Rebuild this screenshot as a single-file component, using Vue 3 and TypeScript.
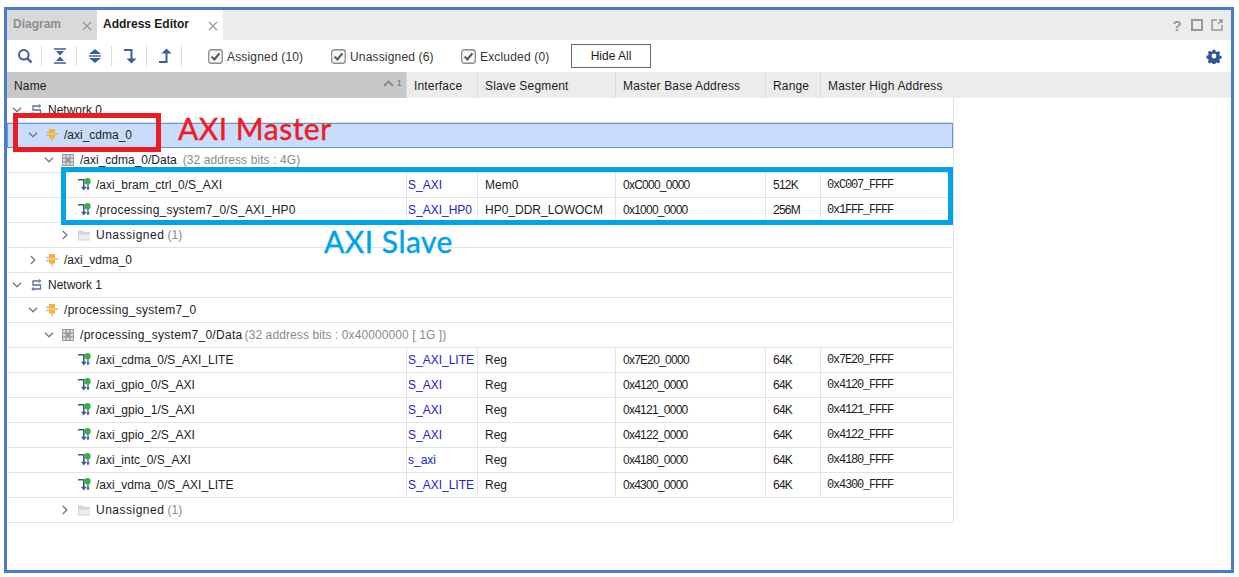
<template>
  <div class="frame">
    <div class="tabs">
      <div class="tab">
        <span>Diagram</span>
        <svg class="close" width="10" height="10" viewBox="0 0 10 10"><path d="M1 1l8 8M9 1l-8 8" /></svg>
      </div>
      <div class="tab active">
        <span>Address Editor</span>
        <svg class="close" width="10" height="10" viewBox="0 0 10 10"><path d="M1 1l8 8M9 1l-8 8" /></svg>
      </div>
      <div class="win-icons">
        <span class="help">?</span>
        <svg width="12" height="12" viewBox="0 0 12 12"><rect x="1" y="1" width="10" height="10" fill="none" stroke="#999" stroke-width="2" /></svg>
        <svg width="12" height="12" viewBox="0 0 12 12"><path d="M6 1H1v10h10V6M7 5l4-4M8 1h3v3" fill="none" stroke="#999" stroke-width="1.6" /></svg>
      </div>
    </div>

    <div class="toolbar">
      <button class="tool">
        <svg width="16" height="16" viewBox="0 0 16 16"><circle cx="6.8" cy="6.8" r="4.8" fill="none" stroke="#3d5f99" stroke-width="2" /><path d="M10.5 10.5l4 4" stroke="#3d5f99" stroke-width="2.4" /></svg>
      </button>
      <i class="sep"></i>
      <button class="tool">
        <svg width="14" height="16" viewBox="0 0 14 16"><path d="M1 1h12M1 15h12" stroke="#3d5f99" stroke-width="1.6" /><path d="M3 3h8L7 7.400zM3 13h8L7 8.600z" fill="#3d5f99" /></svg>
      </button>
      <i class="sep"></i>
      <button class="tool">
        <svg width="14" height="16" viewBox="0 0 14 16"><path d="M7 1l6 5H1zM7 15l-6-5h12z" fill="#3d5f99" /><path d="M1 8h12" stroke="#3d5f99" stroke-width="1.400" /></svg>
      </button>
      <i class="sep"></i>
      <button class="tool">
        <svg width="14" height="16" viewBox="0 0 14 16"><path d="M1 2h7.500v9" fill="none" stroke="#3d5f99" stroke-width="2" /><path d="M3.500 10.500h10L8.500 15.500z" fill="#3d5f99" /></svg>
      </button>
      <i class="sep"></i>
      <button class="tool">
        <svg width="14" height="16" viewBox="0 0 14 16"><path d="M1 14h7.500V5" fill="none" stroke="#3d5f99" stroke-width="2" /><path d="M3.500 5.500h10L8.500 .5z" fill="#3d5f99" /></svg>
      </button>
      <i class="sep"></i>
      <label v-for="f in filters" :key="f.label" class="check" :class="f.cls">
        <svg width="15" height="15" viewBox="0 0 15 15"><rect x=".75" y=".75" width="13.5" height="13.5" rx="2.5" fill="#f7f7f7" stroke="#8c8c8c" stroke-width="1.3" /><path d="M3.6 7.6l2.8 2.8 5-6" fill="none" stroke="#555" stroke-width="2" /></svg>
        <span>{{ f.label }}</span>
      </label>
      <button class="hide-all">Hide All</button>
      <svg class="gear" width="16" height="16" viewBox="0 0 16 16">
        <path d="M6.6 1h2.8l.4 2 1.3.6 1.8-1.100 2 2-1.100 1.800.6 1.300 2 .4v2.800l-2 .4-.6 1.300 1.100 1.800-2 2-1.800-1.100-1.300.6-.4 2H6.600l-.4-2-1.300-.6-1.800 1.100-2-2 1.100-1.800-.6-1.300-2-.4V7.600l2-.4.6-1.300L1.100 4.100l2-2 1.800 1.100 1.300-.6z" transform="translate(.8 .8) scale(.9)" fill="#2f5597" />
        <circle cx="8" cy="8" r="2.400" fill="#fff" />
      </svg>
    </div>

    <div class="head">
      <div class="hcell name-head">
        <span>Name</span>
        <span class="sort">
          <svg width="11" height="7" viewBox="0 0 11 7"><path d="M1 6l4.500-4.500L10 6" fill="none" stroke="#8a8a8a" stroke-width="2" /></svg>
          <b>1</b>
        </span>
      </div>
      <div v-for="h in heads" :key="h" class="hcell">{{ h }}</div>
    </div>

    <div class="grid">
      <div v-for="(r, i) in rows" :key="i" class="row" :class="{ selected: r.selected, leaf: r.high }">
        <div class="cell name" :class="'lv' + r.level">
          <span class="chev">
            <svg v-if="r.open === true" width="10" height="6" viewBox="0 0 10 6"><path d="M1 .8l4 4 4-4" fill="none" stroke="#777" stroke-width="1.300" /></svg>
            <svg v-else-if="r.open === false" width="6" height="10" viewBox="0 0 6 10"><path d="M.8 1l4 4-4 4" fill="none" stroke="#777" stroke-width="1.300" /></svg>
          </span>
          <span class="ico">
            <svg v-if="r.kind === 'net'" width="12" height="12" viewBox="0 0 12 12">
              <path d="M10.500 2H3v4h7.500v4H2" fill="none" stroke="#5c6f96" stroke-width="1.300" />
              <path d="M8.800 .3l2 1.700-2 1.700M3.800 8.300L1.800 10l2 1.700" fill="none" stroke="#5c6f96" stroke-width="1" />
            </svg>
            <svg v-else-if="r.kind === 'cpu'" width="14" height="14" viewBox="0 0 14 14">
              <path d="M1 4.500h3M1 7.500h3M10 6h3M7 10v3.500" stroke="#b9b9b9" stroke-width="1.300" />
              <rect x="4" y="1" width="6" height="9.500" fill="#f9b233" />
              <rect x="4" y="5.400" width="6" height="1.100" fill="#fcd98f" />
            </svg>
            <svg v-else-if="r.kind === 'grid'" width="12" height="12" viewBox="0 0 12 12">
              <rect width="12" height="12" fill="#9a9a9a" />
              <path d="M1 1h2.500v2.500H1zM4.800 1h2.400v2.500H4.800zM8.500 1H11v2.500H8.500zM1 4.800h2.500v2.400H1zM8.500 4.800H11v2.400H8.500zM1 8.500h2.500V11H1zM4.800 8.500h2.400V11H4.800zM8.500 8.500H11V11H8.500z" fill="#dedede" />
            </svg>
            <svg v-else-if="r.kind === 'leaf'" width="13" height="14" viewBox="0 0 13 14">
              <path d="M0 1.800h5.800v8" fill="none" stroke="#3b5a94" stroke-width="1.600" />
              <path d="M3 8.800h5.600l-2.800 3.700z" fill="#3b5a94" />
              <path d="M10 5.500v5" stroke="#3b5a94" stroke-width="1.300" />
              <path d="M8.200 9.500h3.600L10 12.500z" fill="#3b5a94" />
              <circle cx="9.500" cy="3.300" r="3.200" fill="#3fae49" />
            </svg>
            <svg v-else-if="r.kind === 'folder'" width="12" height="11" viewBox="0 0 12 11">
              <path d="M0 .5h5l1 1.500h6v8.500H0z" fill="#d4d4d4" />
              <path d="M1 4.500h11v5H1z" fill="#ececec" />
            </svg>
          </span>
          <span class="label" :class="labelClass(r)">{{ r.name }}</span>
          <span v-if="r.note" class="note" :style="{ marginLeft: r.gap + 'px' }">{{ r.note }}</span>
        </div>
        <template v-if="r.high">
          <div class="cell iface">{{ r.iface }}</div>
          <div class="cell seg">{{ r.seg }}</div>
          <div class="cell tight">{{ r.base }}</div>
          <div class="cell tight">{{ r.range }}</div>
          <div class="cell high">{{ r.high }}</div>
        </template>
      </div>
    </div>

    <div class="mark-red"></div>
    <div class="title-red">AXI Master</div>
    <div class="mark-blue"></div>
    <div class="title-blue">AXI Slave</div>
  </div>
</template>

<script setup lang="ts">
interface Row {
  level: number
  kind: "net" | "cpu" | "grid" | "leaf" | "folder"
  name: string
  open?: boolean
  note?: string
  gap?: number
  selected?: boolean
  iface?: string
  seg?: string
  base?: string
  range?: string
  high?: string
}

const filters = [
  { label: "Assigned (10)", cls: "f1" },
  { label: "Unassigned (6)", cls: "f2" },
  { label: "Excluded (0)", cls: "f3" },
]

const heads = ["Interface", "Slave Segment", "Master Base Address", "Range", "Master High Address"]

function leaf(name: string, iface: string, seg: string, base: string, range: string, high: string): Row {
  return { level: 3, kind: "leaf", name, iface, seg, base, range, high }
}

function labelClass(r: Row) {
  if (r.kind === "folder") return "wider"
  if (r.name.endsWith("HP0")) return "wide-sm"
  return r.name.includes("processing") ? "wide" : ""
}

const rows: Row[] = [
  { level: 0, kind: "net", name: "Network 0", open: true },
  { level: 1, kind: "cpu", name: "/axi_cdma_0", open: true, selected: true },
  { level: 2, kind: "grid", name: "/axi_cdma_0/Data", open: true, note: "(32 address bits : 4G)", gap: 6 },
  leaf("/axi_bram_ctrl_0/S_AXI", "S_AXI", "Mem0", "0xC000_0000", "512K", "0xC007_FFFF"),
  leaf("/processing_system7_0/S_AXI_HP0", "S_AXI_HP0", "HP0_DDR_LOWOCM", "0x1000_0000", "256M", "0x1FFF_FFFF"),
  { level: 3, kind: "folder", name: "Unassigned", open: false, note: "(1)", gap: 3 },
  { level: 1, kind: "cpu", name: "/axi_vdma_0", open: false },
  { level: 0, kind: "net", name: "Network 1", open: true },
  { level: 1, kind: "cpu", name: "/processing_system7_0", open: true },
  { level: 2, kind: "grid", name: "/processing_system7_0/Data", open: true, note: "(32 address bits : 0x40000000 [ 1G ])", gap: 2 },
  leaf("/axi_cdma_0/S_AXI_LITE", "S_AXI_LITE", "Reg", "0x7E20_0000", "64K", "0x7E20_FFFF"),
  leaf("/axi_gpio_0/S_AXI", "S_AXI", "Reg", "0x4120_0000", "64K", "0x4120_FFFF"),
  leaf("/axi_gpio_1/S_AXI", "S_AXI", "Reg", "0x4121_0000", "64K", "0x4121_FFFF"),
  leaf("/axi_gpio_2/S_AXI", "S_AXI", "Reg", "0x4122_0000", "64K", "0x4122_FFFF"),
  leaf("/axi_intc_0/S_AXI", "s_axi", "Reg", "0x4180_0000", "64K", "0x4180_FFFF"),
  leaf("/axi_vdma_0/S_AXI_LITE", "S_AXI_LITE", "Reg", "0x4300_0000", "64K", "0x4300_FFFF"),
  { level: 3, kind: "folder", name: "Unassigned", open: false, note: "(1)", gap: 3 },
]
</script>

<style scoped>
.frame {
  position: relative;
  box-sizing: border-box;
  width: 1230px;
  height: 566px;
  margin: 7px 0 0 4px;
  border: 3px solid #4a7cc9;
  background: #fff;
  font-family: "Liberation Sans", Arial, sans-serif;
  font-size: 12px;
  color: #1c1c1c;
  overflow: hidden;
}
.tabs {
  display: flex;
  height: 30px;
  background: #ececec;
}
.tab {
  display: flex;
  align-items: center;
  justify-content: space-between;
  box-sizing: border-box;
  width: 90px;
  padding: 0 5px 0 6px;
  background: #d9d9d9;
  color: #8f8f8f;
  font-weight: bold;
}
.tab span {
  position: relative;
  top: -1px;
}
.tab.active {
  width: 126px;
  background: #fff;
  color: #1c1c1c;
}
.close {
  stroke: #9a9a9a;
  stroke-width: 1.300;
  margin-top: 2px;
}
.win-icons {
  display: flex;
  align-items: center;
  gap: 8px;
  margin-left: auto;
  padding-right: 8px;
}
.help {
  width: 12px;
  text-align: center;
  font-size: 15px;
  font-weight: bold;
  color: #999;
}
.toolbar {
  display: flex;
  align-items: center;
  height: 32px;
  padding-left: 10px;
}
.tool {
  display: flex;
  align-items: center;
  justify-content: center;
  width: 16px;
  height: 18px;
  margin-right: 8px;
  padding: 0;
  border: 0;
  background: none;
}
.sep {
  width: 1px;
  height: 20px;
  margin-right: 10px;
  background: #dcdcdc;
}
.check {
  display: flex;
  align-items: center;
  gap: 4px;
  color: #333;
  letter-spacing: 0.17px;
}
.check span {
  padding-top: 2px;
}
.f1 {
  margin-left: 16px;
  width: 123px;
}
.f2 {
  width: 130px;
}
.f3 {
  width: 110px;
}
.hide-all {
  box-sizing: border-box;
  width: 80px;
  height: 24px;
  padding: 0;
  border: 1px solid #666;
  background: #fff;
  font: inherit;
  color: #1c1c1c;
}
.gear {
  margin-left: auto;
  margin-right: 9px;
}
.head {
  display: grid;
  grid-template-columns: 400px 71px 138px 150px 55px 133px 1fr;
  height: 26px;
  background: #ececec;
}
.hcell {
  display: flex;
  align-items: center;
  padding: 2px 0 0 7px;
  border-right: 1px solid #dcdcdc;
  letter-spacing: 0.17px;
}
.hcell:last-child {
  border-right: 0;
}
.name-head {
  justify-content: space-between;
  background: #c8c8c8;
  padding-right: 4px;
}
.sort {
  display: flex;
  align-items: center;
  gap: 3px;
  margin-top: -6px;
  color: #777;
  font-size: 9px;
}
.sort b {
  font-weight: normal;
}
.grid {
  width: 947px;
  border-right: 1px solid #e3e3e3;
  box-sizing: border-box;
}
.row {
  display: grid;
  grid-template-columns: 400px 71px 138px 150px 55px 132px;
  height: 25px;
  box-sizing: border-box;
  border-bottom: 1px solid #e3e3e3;
}
.row.selected {
  background: #c9dcfb;
  border: 1px solid #5b9bd5;
}
.selected .cell {
  margin-top: -1px;
}
.cell {
  display: flex;
  align-items: center;
  padding: 0 0 0 7px;
  white-space: nowrap;
  overflow: hidden;
}
.leaf .cell {
  border-right: 1px solid #e3e3e3;
}
.leaf .cell:last-child {
  border-right: 0;
}
.row:not(.leaf) .cell.name {
  grid-column: 1 / -1;
}
.cell.name {
  padding: 0;
}
.lv0 {
  padding-left: 3px !important;
}
.lv1 {
  padding-left: 19px !important;
}
.lv2 {
  padding-left: 35px !important;
}
.lv3 {
  padding-left: 51px !important;
}
.selected .lv1 {
  padding-left: 18px !important;
}
.chev {
  display: flex;
  align-items: center;
  justify-content: center;
  flex: none;
  width: 14px;
  margin-right: 4px;
}
.ico {
  display: flex;
  align-items: center;
  justify-content: center;
  flex: none;
  width: 16px;
  margin-right: 4px;
}
.wide {
  letter-spacing: 0.3px;
}
.wide-sm {
  letter-spacing: 0.2px;
}
.wider {
  letter-spacing: 0.5px;
}
.note {
  color: #8a8a8a;
  letter-spacing: 0.1px;
}
.cell.iface {
  padding-left: 1px;
  color: #2222cc;
}
.tight {
  letter-spacing: -0.75px;
}
.high {
  font-family: "Liberation Mono", monospace;
  letter-spacing: -1.2px;
  padding-left: 6px;
}
.mark-red {
  position: absolute;
  left: 6px;
  top: 103px;
  width: 148px;
  height: 39px;
  box-sizing: border-box;
  border: 5px solid #ed1c24;
}
.title-red {
  position: absolute;
  left: 171px;
  top: 98px;
  font-family: Lato, sans-serif;
  font-size: 30px;
  line-height: 40px;
  letter-spacing: 0.5px;
  -webkit-text-stroke: 0.4px #ed1c24;
  color: #ed1c24;
}
.mark-blue {
  position: absolute;
  left: 54px;
  top: 157px;
  width: 892px;
  height: 58px;
  box-sizing: border-box;
  border: 5px solid #00a2e8;
}
.title-blue {
  position: absolute;
  left: 317px;
  top: 211px;
  font-family: Lato, sans-serif;
  font-size: 30px;
  line-height: 40px;
  letter-spacing: 0.5px;
  -webkit-text-stroke: 0.4px #00a2e8;
  color: #00a2e8;
}
</style>

<style>
html,
body {
  background: #fff;
}
</style>
